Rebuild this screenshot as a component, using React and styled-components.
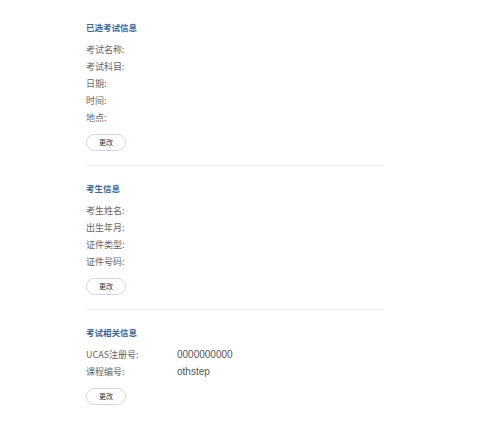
import styled, { createGlobalStyle } from 'styled-components';

const GlobalStyle = createGlobalStyle`
  html, body {
    margin: 0;
    padding: 0;
    background: #ffffff;
  }
  body {
    font-family: "Noto Sans CJK SC", "Liberation Sans", sans-serif;
  }
`;

const sections = [
  {
    title: '已选考试信息',
    rows: [
      ['考试名称:', ''],
      ['考试科目:', ''],
      ['日期:', ''],
      ['时间:', ''],
      ['地点:', ''],
    ],
  },
  {
    title: '考生信息',
    rows: [
      ['考生姓名:', ''],
      ['出生年月:', ''],
      ['证件类型:', ''],
      ['证件号码:', ''],
    ],
  },
  {
    title: '考试相关信息',
    rows: [
      ['UCAS注册号:', '0000000000'],
      ['课程编号:', 'othstep'],
    ],
  },
];

export default function App() {
  return (
    <>
      <GlobalStyle />
      <Page>
        {sections.map((section, i) => (
          <Section key={section.title} $last={i === sections.length - 1}>
            <Heading>{section.title}</Heading>
            <Rows>
              {section.rows.map(([label, value]) => (
                <Row key={label}>
                  <Label>{label}</Label>
                  <Value>{value}</Value>
                </Row>
              ))}
            </Rows>
            <EditButton type="button">更改</EditButton>
          </Section>
        ))}
      </Page>
    </>
  );
}

const Page = styled.main`
  width: 298px;
  margin-left: 86px;
  display: flex;
  flex-direction: column;
`;

const Section = styled.section`
  display: flex;
  flex-direction: column;
  align-items: flex-start;
  padding: ${(p) => (p.$last ? '13.5px 0 0' : '13.5px 0 14px')};
  border-bottom: ${(p) => (p.$last ? 'none' : '1px solid #f0f0f0')};

  &:first-child {
    padding-top: 18.5px;
  }
`;

const Heading = styled.h2`
  margin: 0;
  font-size: 8.5px;
  line-height: 17px;
  font-weight: 700;
  color: #3766a0;
`;

const Rows = styled.div`
  margin-top: 5px;
  display: flex;
  flex-direction: column;
  align-self: stretch;
`;

const Row = styled.div`
  display: grid;
  grid-template-columns: 91px 1fr;
  height: 17px;
  align-items: center;
`;

const Label = styled.span`
  font-size: 9px;
  color: #666666;
  white-space: nowrap;
`;

const Value = styled.span`
  font-family: "Liberation Sans", "Noto Sans CJK SC", sans-serif;
  font-size: 10px;
  color: #555555;
`;

const EditButton = styled.button`
  margin-top: 8.5px;
  box-sizing: border-box;
  width: 40px;
  height: 17px;
  padding: 0;
  border: 1px solid #d6d6d6;
  border-radius: 9px;
  background: #ffffff;
  font-family: "Noto Sans CJK SC", sans-serif;
  font-size: 7px;
  line-height: 15px;
  color: #333333;
  cursor: pointer;
`;
